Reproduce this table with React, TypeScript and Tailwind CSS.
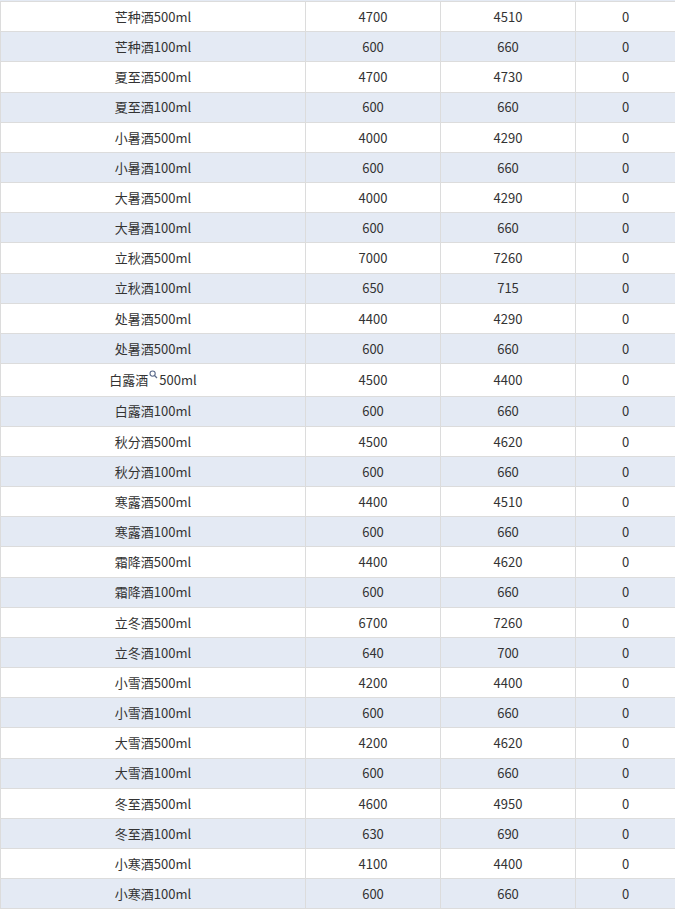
const rows: [string, string, string, string][] = [
  ['芒种酒500ml', '4700', '4510', '0'],
  ['芒种酒100ml', '600', '660', '0'],
  ['夏至酒500ml', '4700', '4730', '0'],
  ['夏至酒100ml', '600', '660', '0'],
  ['小暑酒500ml', '4000', '4290', '0'],
  ['小暑酒100ml', '600', '660', '0'],
  ['大暑酒500ml', '4000', '4290', '0'],
  ['大暑酒100ml', '600', '660', '0'],
  ['立秋酒500ml', '7000', '7260', '0'],
  ['立秋酒100ml', '650', '715', '0'],
  ['处暑酒500ml', '4400', '4290', '0'],
  ['处暑酒500ml', '600', '660', '0'],
  ['白露酒500ml', '4500', '4400', '0'],
  ['白露酒100ml', '600', '660', '0'],
  ['秋分酒500ml', '4500', '4620', '0'],
  ['秋分酒100ml', '600', '660', '0'],
  ['寒露酒500ml', '4400', '4510', '0'],
  ['寒露酒100ml', '600', '660', '0'],
  ['霜降酒500ml', '4400', '4620', '0'],
  ['霜降酒100ml', '600', '660', '0'],
  ['立冬酒500ml', '6700', '7260', '0'],
  ['立冬酒100ml', '640', '700', '0'],
  ['小雪酒500ml', '4200', '4400', '0'],
  ['小雪酒100ml', '600', '660', '0'],
  ['大雪酒500ml', '4200', '4620', '0'],
  ['大雪酒100ml', '600', '660', '0'],
  ['冬至酒500ml', '4600', '4950', '0'],
  ['冬至酒100ml', '630', '690', '0'],
  ['小寒酒500ml', '4100', '4400', '0'],
  ['小寒酒100ml', '600', '660', '0'],
];

// tiny magnifier that shows up next to the 白露 row name
const SearchMark = () => (
  <svg width="9" height="9" viewBox="0 0 9 9" className="inline-block align-[6px] mx-[1px]">
    <circle cx="3.6" cy="3.6" r="2.6" fill="none" stroke="#5b6b8c" strokeWidth="1.1" />
    <line x1="5.5" y1="5.5" x2="8" y2="8" stroke="#5b6b8c" strokeWidth="1.2" />
  </svg>
);

function Name({ text, mark }: { text: string; mark: boolean }) {
  if (!mark) return <span>{text}</span>;
  return (
    <span>
      {text.slice(0, 3)}
      <SearchMark />
      {text.slice(3)}
    </span>
  );
}

export default function App() {
  return (
    <div
      className="w-[675px] h-[911px] overflow-hidden bg-white text-[13px] text-[#333]"
      style={{ fontFamily: '"Microsoft YaHei", "Noto Sans CJK SC", "Noto Sans", sans-serif' }}
    >
      <div className="h-[1px] bg-[#e4eaf4]"></div>
      <div className="border-t border-[#dcdcdc]">
        {rows.map((r, i) => {
          const mark = i === 12;
          return (
            <div
              key={i}
              className={`grid grid-cols-[306px_135px_135px_99px] box-border border-b border-[#dcdcdc] ${
                mark ? 'h-[32.5px]' : 'h-[30.18px]'
              } ${i % 2 === 1 ? 'bg-[#e4eaf4]' : 'bg-white'}`}
            >
              <div className="flex items-center justify-center border-l border-r border-[#dcdcdc] whitespace-nowrap">
                <Name text={r[0]} mark={mark} />
              </div>
              <div className="flex items-center justify-center border-r border-[#dcdcdc]">{r[1]}</div>
              <div className="flex items-center justify-center border-r border-[#dcdcdc]">{r[2]}</div>
              <div className="flex items-center justify-center">{r[3]}</div>
            </div>
          );
        })}
      </div>
    </div>
  );
}
